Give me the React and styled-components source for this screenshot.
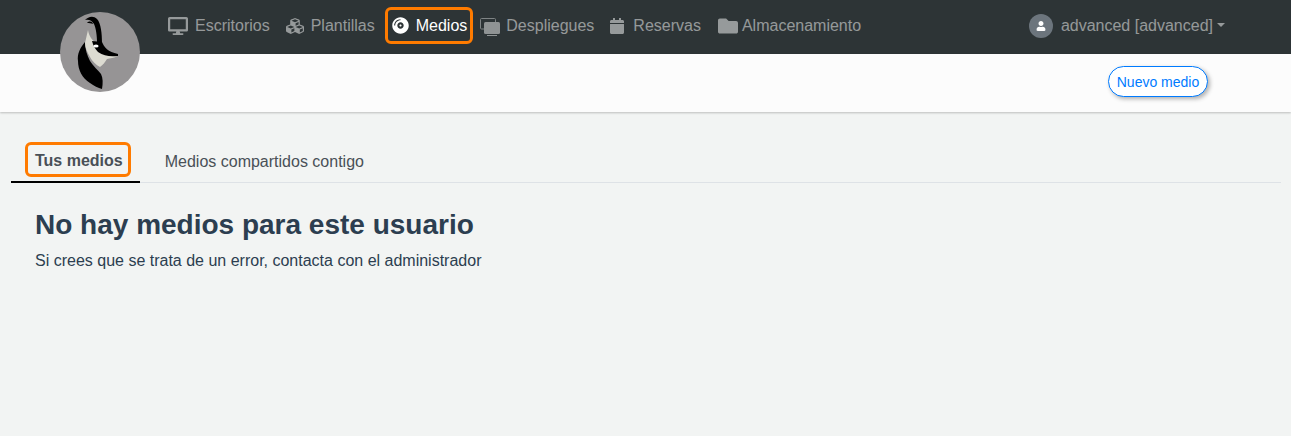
import React from "react";
import styled, { createGlobalStyle } from "styled-components";
import { FaDesktop, FaCubes, FaCompactDisc, FaCalendar, FaFolder, FaUser } from "react-icons/fa";

const Global = createGlobalStyle`
  html, body { margin: 0; padding: 0; height: 100%; }
  body {
    background: #f2f4f3;
    color: #2c3e50;
    font-family: "Liberation Sans", Arial, sans-serif;
    font-size: 16px;
  }
`;

const Page = styled.div`
  position: relative;
  min-height: 436px;
  overflow: hidden;
`;

const Navbar = styled.nav`
  height: 54px;
  box-sizing: border-box;
  background: #2d3436;
  display: flex;
  align-items: center;
  padding: 0 66px 3px 161px;
  justify-content: space-between;
`;

const Logo = styled.div`
  position: absolute;
  left: 60px;
  top: 12px;
  width: 80px;
  height: 80px;
  border-radius: 50%;
  background: #969495;
  z-index: 2;
  svg { display: block; }
`;

const NavList = styled.div`
  display: flex;
  align-items: center;
`;

const NavItem = styled.a`
  display: flex;
  align-items: center;
  height: 37px;
  box-sizing: border-box;
  margin-right: ${p => p.$gap ?? 0}px;
  padding: 0 ${p => (p.$active ? 6 : 7)}px 0 7px;
  gap: ${p => p.$iconGap ?? 7}px;
  color: ${p => (p.$active ? "#ffffff" : "rgba(255,255,255,0.5)")};
  font-size: 16px;
  white-space: nowrap;
  border-radius: 6px;
  outline: ${p => (p.$active ? "3px solid #ff7b00" : "none")};
  outline-offset: -3px;
  svg { flex: none; display: block; }
`;

const UserMenu = styled.div`
  display: flex;
  align-items: center;
  gap: 8px;
  color: rgba(255,255,255,0.5);
  font-size: 16px;
`;

const Avatar = styled.span`
  width: 24px;
  height: 24px;
  border-radius: 50%;
  background: #6c757d;
  color: #fff;
  display: flex;
  align-items: center;
  justify-content: center;
`;

const Caret = styled.span`
  width: 0;
  height: 0;
  margin-left: -4px;
  margin-top: -2px;
  border-top: 4.8px solid rgba(255,255,255,0.5);
  border-left: 4.8px solid transparent;
  border-right: 4.8px solid transparent;
`;

const Toolbar = styled.div`
  height: 58px;
  box-sizing: border-box;
  background: #fcfcfc;
  box-shadow: 0 1px 2px rgba(0,0,0,0.22);
  display: flex;
  justify-content: flex-end;
  align-items: flex-start;
  padding: 12px 83px 0 0;
`;

const PillButton = styled.button`
  height: 31px;
  width: 100px;
  padding: 0;
  background: #fff;
  color: #007bff;
  border: 1px solid #007bff;
  border-radius: 16px;
  font-family: "Liberation Sans", Arial, sans-serif;
  font-size: 14px;
  box-shadow: 2px 2px 4px rgba(0,0,0,0.3);
`;

const Tabs = styled.div`
  display: flex;
  align-items: flex-end;
  margin: 29px 10px 0 11px;
  height: 41px;
  border-bottom: 1px solid #dee2e6;
`;

const Tab = styled.div`
  box-sizing: border-box;
  height: 42px;
  margin-bottom: -1px;
  padding: ${p => (p.$active ? "0 17px 0 24px" : "0 25px")};
  display: flex;
  align-items: center;
  justify-content: center;
  color: #495057;
  font-size: 16px;
  position: relative;
  border-bottom: ${p => (p.$active ? "2px solid #000" : "none")};
  font-weight: ${p => (p.$active ? 700 : 400)};
`;

const Highlight = styled.span`
  position: absolute;
  left: 14px;
  right: 9px;
  top: 1px;
  bottom: 4px;
  border: 3px solid #ff7b00;
  border-radius: 6px;
`;

const Content = styled.main`
  padding: 25px 35px 0;
`;

const Title = styled.h1`
  margin: 0 0 7px;
  font-size: 28px;
  line-height: 34px;
  font-weight: 700;
  color: #2c3e50;
`;

const Message = styled.p`
  margin: 0;
  font-size: 16px;
  line-height: 24px;
  color: #2c3e50;
`;

const ChamoisLogo = () => (
  <svg width="80" height="80" viewBox="0 0 80 80">
    <path d="M25 30 C20 36 17 42 18 49 C18 58 22 66 30 71 C34 74 38 76 42 77 C43 71 43 66 41 62 C38 58 33 54 30 49 C27 43 25 37 25 30Z" fill="#000" />
    <path d="M28 18 C29 24 32 28 36 31 L40 37 C44 41 50 42 58 42 L58 44 C54 46 50 46 47 47 C45 50 43 53 40 55 C36 53 32 49 30 45 C27 40 25 35 25 31 C26 27 27 22 28 18Z" fill="#dcdbd1" />
    <path d="M25 8 C28 5 33 3 37 7 C41 11 42 22 42 31 L37 31 C37 24 36 16 34 12 C32 8 28 7 25 8Z" fill="#000" />
    <path d="M27 11 C29 9 32 9 33 12 C31 11 29 11 27 11Z" fill="#000" />
    <path d="M32 29 L42 30 C44 35 48 40 58 42 L58 44 C50 45 44 44 38 40 C35 37 33 33 32 29Z" fill="#000" />
    <ellipse cx="36" cy="34" rx="2.6" ry="1.5" fill="#fff" />
  </svg>
);

const DeployIcon = () => (
  <svg width="20" height="20" viewBox="0 0 20 20" fill="none">
    <rect x="0.5" y="2.5" width="15" height="10.5" rx="1" stroke="#7f8485" />
    <rect x="4" y="6" width="16" height="12" rx="1.5" fill="#8f9394" />
    <rect x="7" y="19" width="10" height="1" fill="#8f9394" />
  </svg>
);

const items = [
  { label: "Escritorios", Icon: FaDesktop, size: 20, gap: 2, iconGap: 7 },
  { label: "Plantillas", Icon: FaCubes, size: 18, gap: 3, iconGap: 7 },
  { label: "Medios", Icon: FaCompactDisc, size: 17, active: true, gap: 0, iconGap: 7 },
  { label: "Despliegues", Deploy: true, gap: 1, iconGap: 6 },
  { label: "Reservas", Icon: FaCalendar, size: 16, gap: 3, iconGap: 8 },
  { label: "Almacenamiento", Icon: FaFolder, size: 20, gap: 0, iconGap: 4 },
];

export default function App() {
  return (
    <Page>
      <Global />
      <Navbar>
        <Logo>
          <ChamoisLogo />
        </Logo>
        <NavList>
          {items.map(({ label, Icon, size, active, gap, iconGap, Deploy }) => (
            <NavItem key={label} $active={active} $gap={gap} $iconGap={iconGap}>
              {Deploy ? <DeployIcon /> : <Icon size={size} />}
              {label}
            </NavItem>
          ))}
        </NavList>
        <UserMenu>
          <Avatar>
            <FaUser size={10} />
          </Avatar>
          advanced [advanced]
          <Caret />
        </UserMenu>
      </Navbar>
      <Toolbar>
        <PillButton>Nuevo medio</PillButton>
      </Toolbar>
      <Tabs>
        <Tab $active>
          Tus medios
          <Highlight />
        </Tab>
        <Tab>Medios compartidos contigo</Tab>
      </Tabs>
      <Content>
        <Title>No hay medios para este usuario</Title>
        <Message>Si crees que se trata de un error, contacta con el administrador</Message>
      </Content>
    </Page>
  );
}
